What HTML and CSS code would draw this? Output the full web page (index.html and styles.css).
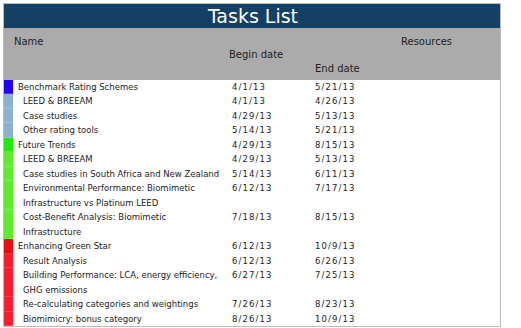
FILE: index.html
```html
<!DOCTYPE html>
<html>
<head>
<meta charset="utf-8">
<link rel="stylesheet" href="styles.css">
</head>
<body>
<div class="frame">
  <div class="title">Tasks List</div>
  <div class="head">
    <div class="h-name">Name</div>
    <div class="h-begin">Begin date</div>
    <div class="h-end">End date</div>
    <div class="h-res">Resources</div>
  </div>
  <div class="rows">
    <div class="row"><span class="strip c-blue"></span><span class="name parent">Benchmark Rating Schemes</span><span class="d">4/1/13</span><span class="d">5/21/13</span><span></span></div>
    <div class="row"><span class="strip c-steel"></span><span class="name">LEED &amp; BREEAM</span><span class="d">4/1/13</span><span class="d">4/26/13</span><span></span></div>
    <div class="row"><span class="strip c-steel"></span><span class="name">Case studies</span><span class="d">4/29/13</span><span class="d">5/13/13</span><span></span></div>
    <div class="row"><span class="strip c-steel"></span><span class="name">Other rating tools</span><span class="d">5/14/13</span><span class="d">5/21/13</span><span></span></div>
    <div class="row"><span class="strip c-green"></span><span class="name parent">Future Trends</span><span class="d">4/29/13</span><span class="d">8/15/13</span><span></span></div>
    <div class="row"><span class="strip c-lgreen"></span><span class="name">LEED &amp; BREEAM</span><span class="d">4/29/13</span><span class="d">5/13/13</span><span></span></div>
    <div class="row"><span class="strip c-lgreen"></span><span class="name">Case studies in South Africa and New Zealand</span><span class="d">5/14/13</span><span class="d">6/11/13</span><span></span></div>
    <div class="row"><span class="strip c-lgreen"></span><span class="name">Environmental Performance: Biomimetic<br>Infrastructure vs Platinum LEED</span><span class="d">6/12/13</span><span class="d">7/17/13</span><span></span></div>
    <div class="row"><span class="strip c-lgreen"></span><span class="name">Cost-Benefit Analysis: Biomimetic<br>Infrastructure</span><span class="d">7/18/13</span><span class="d">8/15/13</span><span></span></div>
    <div class="row"><span class="strip c-red"></span><span class="name parent">Enhancing Green Star</span><span class="d">6/12/13</span><span class="d">10/9/13</span><span></span></div>
    <div class="row"><span class="strip c-lred"></span><span class="name">Result Analysis</span><span class="d">6/12/13</span><span class="d">6/26/13</span><span></span></div>
    <div class="row"><span class="strip c-lred"></span><span class="name">Building Performance: LCA, energy efficiency,<br>GHG emissions</span><span class="d">6/27/13</span><span class="d">7/25/13</span><span></span></div>
    <div class="row"><span class="strip c-lred"></span><span class="name">Re-calculating categories and weightings</span><span class="d">7/26/13</span><span class="d">8/23/13</span><span></span></div>
    <div class="row"><span class="strip c-lred"></span><span class="name">Biomimicry: bonus category</span><span class="d">8/26/13</span><span class="d">10/9/13</span><span></span></div>
  </div>
</div>
</body>
</html>
```

FILE: styles.css
```css
html, body {
  margin: 0;
  padding: 0;
  background: #ffffff;
}
body {
  font-family: "DejaVu Sans", Verdana, sans-serif;
  color: #1c1c1c;
}
.frame {
  margin: 3px 0 0 3px;
  width: 496px;
  border: 1px solid #bcbcbc;
  background: #ffffff;
}
.title {
  height: 24px;
  background: #144066;
  color: #ffffff;
  font-size: 19px;
  line-height: 25px;
  text-align: center;
  padding-left: 2px;
}
.head {
  height: 52px;
  background: #ababab;
  display: grid;
  grid-template-columns: 10px 215px 86px 86px 1fr;
  font-size: 10px;
  line-height: 12px;
  color: #1e1e1e;
  align-items: start;
}
.h-name { grid-column: 2; padding-top: 8px; }
.h-begin { grid-column: 3; padding-top: 21px; }
.h-end { grid-column: 4; padding-top: 35px; }
.h-res { grid-column: 5; padding-top: 8px; }
.row {
  display: grid;
  grid-template-columns: 9px 219px 83px 86px 1fr;
  font-size: 8.5px;
  line-height: 14.47px;
}
.strip {
  box-shadow: inset 0 -1px 0 rgba(255, 255, 255, 0.18);
}
.name {
  padding-left: 10px;
}
.name.parent {
  padding-left: 5px;
}
.d {
  letter-spacing: 1.1px;
}
.c-blue { background: #2400ff; }
.c-steel { background: #8db1cc; }
.c-green { background: #1eea0a; }
.c-lgreen { background: #5fec2c; }
.c-red { background: #ec0c10; }
.c-lred { background: #fd1c2c; }
```
